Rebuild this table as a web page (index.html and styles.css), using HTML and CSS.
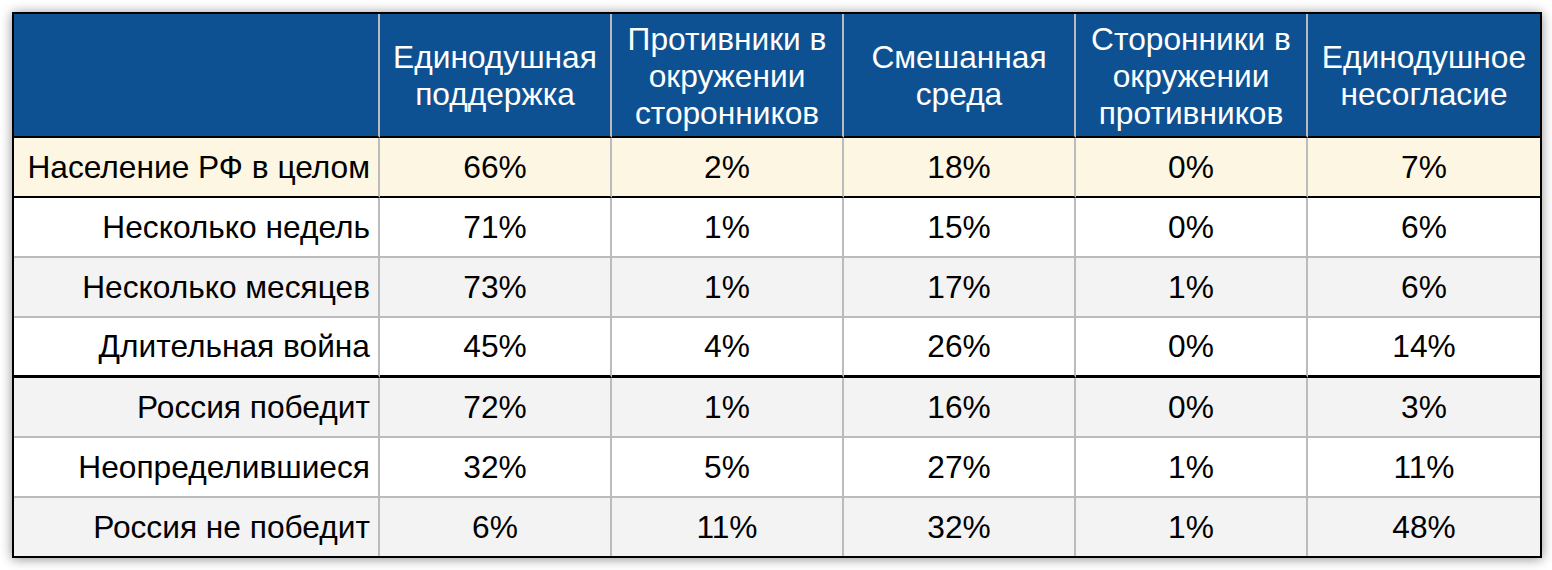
FILE: index.html
```html
<!DOCTYPE html>
<html lang="ru">
<head>
<meta charset="utf-8">
<link rel="stylesheet" href="styles.css">
</head>
<body>
<table class="survey">
  <thead>
    <tr class="head-row">
      <th class="label-col"></th>
      <th>Единодушная поддержка</th>
      <th>Противники в окружении сторонников</th>
      <th>Смешанная среда</th>
      <th>Сторонники в окружении противников</th>
      <th class="last">Единодушное несогласие</th>
    </tr>
  </thead>
  <tbody>
    <tr class="row total">
      <td class="label">Население РФ в целом</td><td>66%</td><td>2%</td><td>18%</td><td>0%</td><td class="last">7%</td>
    </tr>
    <tr class="row white">
      <td class="label">Несколько недель</td><td>71%</td><td>1%</td><td>15%</td><td>0%</td><td class="last">6%</td>
    </tr>
    <tr class="row grey">
      <td class="label">Несколько месяцев</td><td>73%</td><td>1%</td><td>17%</td><td>1%</td><td class="last">6%</td>
    </tr>
    <tr class="row white group-end">
      <td class="label">Длительная война</td><td>45%</td><td>4%</td><td>26%</td><td>0%</td><td class="last">14%</td>
    </tr>
    <tr class="row grey">
      <td class="label">Россия победит</td><td>72%</td><td>1%</td><td>16%</td><td>0%</td><td class="last">3%</td>
    </tr>
    <tr class="row white">
      <td class="label">Неопределившиеся</td><td>32%</td><td>5%</td><td>27%</td><td>1%</td><td class="last">11%</td>
    </tr>
    <tr class="row grey final">
      <td class="label">Россия не победит</td><td>6%</td><td>11%</td><td>32%</td><td>1%</td><td class="last">48%</td>
    </tr>
  </tbody>
</table>
</body>
</html>
```
FILE: styles.css
```css
html, body {
  margin: 0;
  padding: 0;
  background: #ffffff;
}
body {
  padding: 12px;
  font-family: "Liberation Sans", Arial, Helvetica, sans-serif;
}
.survey {
  border-collapse: separate;
  border-spacing: 0;
  table-layout: fixed;
  width: 1528px;
  border: 2px solid #000;
  box-shadow: 0 1px 11px rgba(0, 0, 0, 0.45);
  font-size: 31.7px;
  color: #000;
}
.survey th,
.survey td {
  box-sizing: border-box;
  padding: 0 4px;
  text-align: center;
  vertical-align: middle;
  border-right: 2px solid #bbbbbb;
  border-bottom: 2px solid #bbbbbb;
  font-weight: normal;
}
.survey th {
  width: 232px;
}
.survey th.label-col {
  width: 366px;
}
.survey th.last,
.survey td.last {
  border-right: none;
}
.head-row th {
  height: 124px;
  background: #0e5192;
  color: #fff;
  line-height: 37px;
  padding-top: 2px;
  border-bottom: 2px solid #000;
}
.row td {
  height: 60px;
}
.survey td.label {
  text-align: right;
  padding-right: 8px;
}
.total td {
  background: #fdf6e2;
  border-bottom: 2px solid #000;
}
.white td {
  background: #ffffff;
}
.grey td {
  background: #f3f3f3;
}
.group-end td {
  border-bottom: 3px solid #000;
}
.final td {
  height: 58px;
  border-bottom: none;
}
```
